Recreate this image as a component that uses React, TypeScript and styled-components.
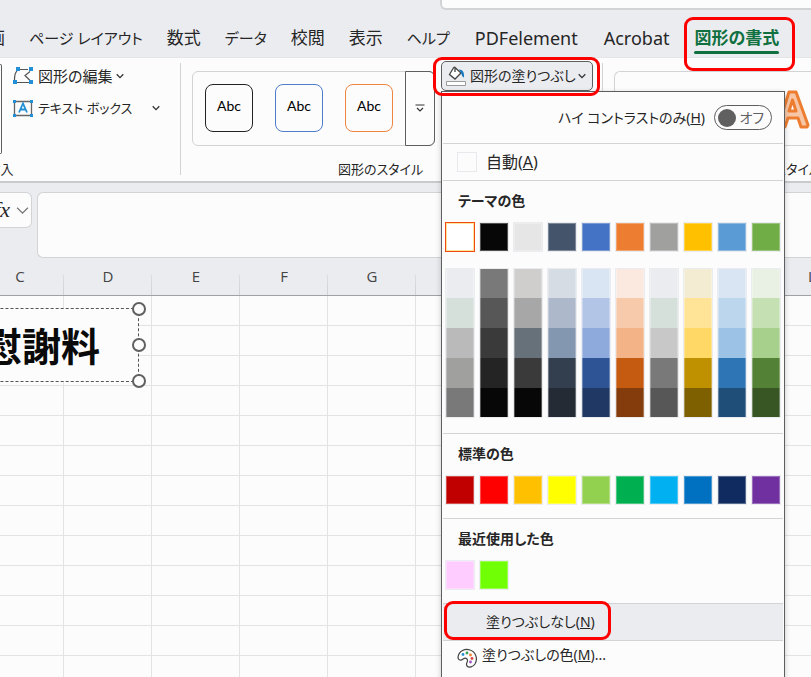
import React from 'react';
import styled, { createGlobalStyle, css } from 'styled-components';

const line = '#d2d3d5';
const chrome = '#ebecf0';
const paper = '#fcfcfc';
const ink = '#262626';

const Global = createGlobalStyle`
  *, *::before, *::after { box-sizing: border-box; }
  body { margin: 0; }
  button, input { font: inherit; color: inherit; }
  button { padding: 0; border: 0; background: none; text-align: left; white-space: nowrap; }
  svg { flex: none; }
`;

const Window = styled.div`
  height: 100vh;
  overflow: hidden;
  display: flex;
  flex-direction: column;
  background: ${chrome};
  color: ${ink};
  font: 15px/20px 'Noto Sans', 'Noto Sans CJK JP', sans-serif;
  font-feature-settings: 'palt';
`;

const TitleBar = styled.header`
  flex: none;
  height: 20px;
  padding-left: 440px;
`;

const SearchBox = styled.div`
  height: 10px;
  border: solid ${line};
  border-width: 0 0 2px 2px;
  border-radius: 0 0 0 6px;
  background: ${paper};
`;

const Tabs = styled.nav`
  flex: none;
  display: flex;
  gap: 24px;
  height: 37px;
  margin-left: -29px;
  padding-bottom: 3px;
  font-size: 17px;
  line-height: 24px;
`;

type Script = 'kanji' | 'kana' | 'latin';

const scriptSize: Record<Script, number> = { kanji: 17, kana: 15, latin: 18 };

const Tab = styled.button<{ $active?: boolean; $script?: Script }>`
  position: relative;
  flex: none;
  align-self: stretch;
  padding: 2px ${p => (p.$script === 'latin' ? 1 : 0)}px 0;
  font-size: ${p => scriptSize[p.$script ?? 'kanji']}px;
  ${p => p.$active && css`
    color: #107040;
    font-weight: 700;
    &::after {
      content: '';
      position: absolute;
      left: 0;
      right: 0;
      bottom: 0;
      height: 3px;
      border-radius: 2px;
      background: #107040;
    }
  `}
`;

const Callout = styled.span<{ $inset: string }>`
  position: absolute;
  z-index: 3;
  inset: ${p => p.$inset};
  border: 3px solid #fe0000;
  border-radius: 9px;
  pointer-events: none;
`;

const Ribbon = styled.section`
  position: relative;
  z-index: 2;
  flex: none;
  display: flex;
  height: 126px;
  border-top: 1px solid #e4e5e7;
  border-bottom: 2px solid #c9cacb;
  background: ${paper};
`;

const Group = styled.div<{ $width?: number }>`
  position: relative;
  flex: ${p => (p.$width ? 'none' : '1 0 auto')};
  width: ${p => (p.$width ? p.$width + 'px' : 'auto')};
  display: flex;
  &:not(:last-child)::after {
    content: '';
    position: absolute;
    right: 0;
    top: 5px;
    height: 112px;
    border-right: 1px solid ${line};
  }
`;

const GroupLabel = styled.span<{ $left: number }>`
  position: absolute;
  left: ${p => p.$left}px;
  bottom: 2px;
  white-space: nowrap;
  font-size: 13px;
`;

const ShapeGallery = styled.div`
  width: 2px;
  height: 90px;
  margin-top: 6px;
  border: solid #5c5e60;
  border-width: 1px 1px 1px 0;
  border-radius: 0 6px 6px 0;
`;

const Commands = styled.div`
  display: flex;
  flex-direction: column;
  gap: 8px;
  padding: 6px 0 0 8px;
`;

const Command = styled.button<{ $gap?: number; $size?: number }>`
  display: flex;
  align-items: center;
  height: 24px;
  font-size: ${p => p.$size ?? 15}px;
  > svg:first-child { margin-right: 4px; }
  > svg:last-child { margin-left: ${p => p.$gap ?? 4}px; }
`;

const Gallery = styled.div`
  flex: none;
  display: flex;
  width: 243px;
  height: 75px;
  margin: 13px 0 0 11px;
  border: 1px solid ${line};
  border-radius: 6px;
`;

const Styles = styled.div`
  flex: 1;
  display: flex;
  gap: 22px;
  padding: 12px;
`;

const StyleTile = styled.button<{ $color: string }>`
  width: 48px;
  height: 48px;
  border: 1px solid ${p => p.$color};
  border-radius: 8px;
  text-align: center;
  color: #000;
  font: 14px/20px Lato, sans-serif;
  padding-bottom: 4px;
`;

const GalleryMore = styled.button`
  display: flex;
  align-items: center;
  justify-content: center;
  width: 30px;
  margin: -1px;
  border: 1px solid #5c5e60;
  border-radius: 0 6px 6px 0;
`;

const WordArtGallery = styled.div`
  flex: 1;
  height: 75px;
  margin: 13px 0 0 11px;
  padding: 16px 0 0 161px;
  border: solid ${line};
  border-width: 1px 0 1px 1px;
  border-radius: 6px 0 0 6px;
`;

const FillAnchor = styled.div`
  position: relative;
  z-index: 2;
  width: 152px;
  height: 30px;
  margin: 3px 0 0 6px;
`;

const FillButton = styled.button`
  display: flex;
  align-items: center;
  width: 100%;
  height: 30px;
  padding-left: 4px;
  border: 1px solid #5c5e60;
  border-radius: 5px;
  background: ${chrome};
  font-size: 14px;
  > svg:first-child { margin-right: 4px; }
  > svg:last-child { margin-left: 2px; }
`;

const Menu = styled.div`
  position: absolute;
  top: 30px;
  left: 0;
  width: 344px;
  height: 620px;
  padding: 0 1px;
  border: 1px solid #5c5e60;
  background: ${paper};
  box-shadow: 0 2px 6px rgba(0, 0, 0, 0.2);
  font-size: 14px;
`;

const ContrastRow = styled.label`
  display: flex;
  align-items: center;
  justify-content: flex-end;
  gap: 9px;
  height: 52px;
  padding-right: 11px;
  border-bottom: 1px solid ${line};
`;

const Switch = styled.span`
  position: relative;
  display: flex;
  align-items: center;
  justify-content: flex-end;
  width: 58px;
  height: 25px;
  padding-right: 7px;
  border: 1px solid #5c5e60;
  border-radius: 13px;
  color: #5f6062;
  &::before {
    content: '';
    position: absolute;
    left: 3px;
    width: 18px;
    height: 18px;
    border-radius: 50%;
    background: #606060;
  }
  input { position: absolute; inset: 0; margin: 0; opacity: 0; }
`;

const MenuItem = styled.button<{ $hover?: boolean; $indent: number; $size?: number }>`
  position: relative;
  display: flex;
  align-items: center;
  width: 100%;
  height: 37px;
  padding-left: ${p => p.$indent}px;
  border-bottom: 1px solid ${line};
  background: ${p => (p.$hover ? chrome : paper)};
  font-size: ${p => p.$size ?? 14}px;
  &:last-child { border: 0; height: 28px; }
  > svg { margin: 6px 5px 0 0; }
`;

const EmptySwatch = styled.span`
  width: 20px;
  height: 20px;
  margin-right: 9px;
  border: 1px solid #e8e9ec;
`;

const Section = styled.section`
  padding-bottom: 13px;
  border-bottom: 1px solid ${line};
`;

const SectionTitle = styled.h2`
  height: 41px;
  margin: 0;
  padding: 10px 0 0 15px;
  font-size: 14px;
  line-height: 20px;
  font-weight: 700;
`;

const Swatches = styled.div`
  display: flex;
  gap: 4px;
  padding-left: 2px;
`;

const Ramps = styled(Swatches)`
  padding-top: 16px;
  padding-bottom: 2px;
`;

const Ramp = styled.div`
  display: flex;
  flex-direction: column;
  border: 1px solid #ebecef;
`;

const Swatch = styled.button<{ $color: string; $selected?: boolean }>`
  width: 30px;
  height: 30px;
  border: 1px solid ${p => (p.$selected ? '#f04a14' : '#ebecef')};
  background: ${p => p.$color};
  box-shadow: inset 0 0 0 1px ${p => (p.$selected ? '#ffe59a' : 'rgba(255,255,255,.3)')};
`;

const Shade = styled.button<{ $color: string }>`
  width: 28px;
  height: 30px;
  background: ${p => p.$color};
  box-shadow: inset 1px 0 rgba(255,255,255,.3), inset -1px 0 rgba(255,255,255,.3);
  &:first-child, &:last-child { height: 29px; }
`;

const FormulaBar = styled.div`
  flex: none;
  display: flex;
  gap: 5px;
  height: 75px;
  padding-top: 9px;
`;

const FunctionBox = styled.button`
  display: flex;
  align-items: center;
  justify-content: flex-end;
  gap: 6px;
  width: 32px;
  height: 36px;
  padding-right: 2px;
  border: 1px solid ${line};
  border-left: 0;
  border-radius: 0 6px 6px 0;
  background: ${paper};
  font: italic 22px/24px 'Liberation Serif', serif;
  overflow: hidden;
`;

const FormulaInput = styled.input`
  flex: 1;
  height: 66px;
  border: 1px solid ${line};
  border-right: 0;
  border-radius: 6px 0 0 6px;
  background: ${paper};
`;

const SheetArea = styled.main`
  position: relative;
  flex: 1;
  min-height: 0;
  overflow: hidden;
`;

const Sheet = styled.table`
  table-layout: fixed;
  width: 880px;
  margin-left: -24px;
  border-spacing: 0;
  background: ${paper};
  th {
    height: 38px;
    padding: 0 0 2px;
    border-bottom: 1px solid #a0a1a3;
    background: linear-gradient(#dcddde, #d0d2d2) right bottom / 1px 20px no-repeat ${chrome};
    color: #444;
    font: 15px/20px 'Open Sans', sans-serif;
  }
  td {
    height: 30px;
    padding: 0;
    border: solid #e2e3e3;
    border-width: 0 1px 1px 0;
  }
`;

const Shape = styled.div`
  position: absolute;
  left: -100px;
  top: 50px;
  width: 239px;
  height: 74px;
  padding: 15px 38px 0 0;
  border: 1px dashed #555;
  background: ${paper};
  color: #0a0a0a;
  text-align: right;
  white-space: nowrap;
  font: 700 39px/40px 'Noto Sans CJK JP', sans-serif;
`;

const Handle = styled.i<{ $top: string }>`
  position: absolute;
  right: -8px;
  top: ${p => p.$top};
  width: 14px;
  height: 14px;
  margin-top: -7px;
  border: 2px solid #606060;
  border-radius: 50%;
  background: ${paper};
`;

const Chevron = ({ size = 8, color = '#333' }: { size?: number; color?: string }) => (
  <svg width={size} height={size} viewBox="0 0 8 8" fill="none" stroke={color} strokeWidth={size > 8 ? 0.8 : 1.3}>
    <path d="M.7 2.3 4 5.6l3.3-3.3" />
  </svg>
);

const EditShapeIcon = () => (
  <svg width="24" height="20" viewBox="0 0 24 20" fill="none">
    <path d="M7 5C4.500 7 4.500 10 4.500 14M9 3.500h9M20 5.500l-5 4 5 5M7 16.500h12" stroke="#555" strokeWidth="1.200" />
    <path d="M6 1h4v4H6zM19 1h4v4h-4zM3 14h4v4H3zM19 14h4v4h-4z" fill="#2190d6" />
  </svg>
);

const TextBoxIcon = () => (
  <svg width="24" height="20" viewBox="0 0 24 20" fill="none">
    <path d="M4.500 3.500h17v14h-17z" stroke="#666" strokeWidth="1.300" />
    <path d="m9 14.500 4-9 4 9M10.500 11.500h5" stroke="#2190d6" strokeWidth="1.800" />
    <path d="M3 2h3v3H3zM20 2h3v3h-3zM3 16h3v3H3zM20 16h3v3h-3z" fill="#2190d6" />
  </svg>
);

const BucketIcon = () => (
  <svg width="20" height="22" viewBox="0 0 20 22" fill="none">
    <path d="M8 2 3.500 9.500 9 14l6-6-6-5.500V7" stroke="#444" strokeWidth="1.300" fill="#fff" />
    <path d="M13 4.500c4 0 5.500 3 5 8-2.500-1-2-4-4.500-7" fill="#1878bd" />
    <path d="M.5 16.500h19v4H.5z" fill="#fff" stroke="#9a9b98" />
  </svg>
);

const PaletteIcon = () => (
  <svg width="20" height="20" viewBox="0 0 20 20" fill="none">
    <path d="M1 9C2 3 8 0 13 2c6 2 8 9 5 14-2 3-6 4-8 2-2-3 2-4 0-7-3-3-4 2-7 1-1 0-2-1-2-3Z" stroke="#444" strokeWidth="1.2" />
    <circle cx="6" cy="6.500" r="1.400" fill="#2490d0" />
    <circle cx="10" cy="5" r="1.400" fill="#39a055" />
    <circle cx="13.500" cy="7" r="1.400" fill="#f08030" />
    <circle cx="15" cy="10.500" r="1.400" fill="#e04444" />
    <circle cx="13.500" cy="14" r="1.400" fill="#a050c0" />
  </svg>
);

const WordArtIcon = () => (
  <svg width="34" height="42" viewBox="0 0 34 42">
    <path d="M2 39 13 4h7l12 33-1 2h-6l-3-9H12l-3 9Zm11-16h7L16.500 12Z" fill="#f7c6a6" stroke="#ed7d31" strokeWidth="3" strokeLinejoin="round" />
  </svg>
);

const themeColors = ['#ffffff', '#070707', '#e6e6e6', '#44546a', '#4472c4', '#ed7d31', '#a0a09e', '#ffc000', '#5b9bd5', '#70ad47'];
const ramps = [
  ['#ebecf0', '#d6e0da', '#bababa', '#a0a09e', '#797979'],
  ['#797979', '#575757', '#3a3a3a', '#242424', '#070707'],
  ['#d0cecd', '#a7a7a7', '#67717a', '#3a3a3a', '#070707'],
  ['#d5dce4', '#adb8ca', '#8497b0', '#333f4f', '#242b35'],
  ['#dae5f3', '#b3c5e7', '#8ea9db', '#2f5496', '#203864'],
  ['#fbe9e0', '#f7caac', '#f4b287', '#c55a11', '#843c0c'],
  ['#ebecf0', '#d6e0da', '#c8c8c8', '#797979', '#575757'],
  ['#f4ebd3', '#ffe497', '#ffd865', '#bf9000', '#7f6000'],
  ['#dae5f3', '#bcd6ee', '#9cc2e5', '#2e75b6', '#1f4e79'],
  ['#e8f1e3', '#c5e0b3', '#a8d08d', '#538135', '#385623'],
];
const standard = ['#c00000', '#ff0000', '#ffc000', '#ffff00', '#92d050', '#00b050', '#00b0f0', '#0070c0', '#0f2b60', '#7030a0'];
const recent = ['#ffccff', '#70ff05'];
const tabs: { label: string; script: Script }[] = [
  { label: '描画', script: 'kanji' },
  { label: 'ページ レイアウト', script: 'kana' },
  { label: '数式', script: 'kanji' },
  { label: 'データ', script: 'kana' },
  { label: '校閲', script: 'kanji' },
  { label: '表示', script: 'kanji' },
  { label: 'ヘルプ', script: 'kana' },
  { label: 'PDFelement', script: 'latin' },
  { label: 'Acrobat', script: 'latin' },
];
const columns = [...'CDEFGHIJKL'];

const FillMenu = () => (
  <Menu>
    <ContrastRow>
      <span>ハイ コントラストのみ(<u>H</u>)</span>
      <Switch><input type="checkbox" role="switch" />オフ</Switch>
    </ContrastRow>
    <MenuItem $indent={14} $size={16}><EmptySwatch /><span>自動(<u>A</u>)</span></MenuItem>
    <Section>
      <SectionTitle>テーマの色</SectionTitle>
      <Swatches>
        {themeColors.map((c, i) => <Swatch key={c} $color={c} $selected={i === 0} aria-label={c} />)}
      </Swatches>
      <Ramps>
        {ramps.map((ramp, i) => (
          <Ramp key={i}>{ramp.map(c => <Shade key={c} $color={c} aria-label={c} />)}</Ramp>
        ))}
      </Ramps>
    </Section>
    <Section>
      <SectionTitle>標準の色</SectionTitle>
      <Swatches>{standard.map(c => <Swatch key={c} $color={c} aria-label={c} />)}</Swatches>
    </Section>
    <Section>
      <SectionTitle>最近使用した色</SectionTitle>
      <Swatches>{recent.map(c => <Swatch key={c} $color={c} aria-label={c} />)}</Swatches>
    </Section>
    <MenuItem $hover $indent={43}>
      <span>塗りつぶしなし(<u>N</u>)</span>
      <Callout $inset="-3px 172px 0 1px" />
    </MenuItem>
    <MenuItem $indent={14}><PaletteIcon /><span>塗りつぶしの色(<u>M</u>)...</span></MenuItem>
  </Menu>
);

export default function App() {
  return (
    <Window>
      <Global />
      <TitleBar><SearchBox /></TitleBar>
      <Tabs>
        {tabs.map(t => <Tab key={t.label} $script={t.script}>{t.label}</Tab>)}
        <Tab $active>図形の書式<Callout $inset="-3px -16px -17px -10px" /></Tab>
      </Tabs>
      <Ribbon>
        <Group $width={181}>
          <ShapeGallery />
          <Commands>
            <Command><EditShapeIcon />図形の編集<Chevron /></Command>
            <Command $gap={20} $size={13}><TextBoxIcon />テキスト ボックス<Chevron /></Command>
          </Commands>
          <GroupLabel $left={-51}>図形の挿入</GroupLabel>
        </Group>
        <Group $width={422}>
          <Gallery>
            <Styles>
              <StyleTile $color="#222">Abc</StyleTile>
              <StyleTile $color="#4f7dcb">Abc</StyleTile>
              <StyleTile $color="#ee8640">Abc</StyleTile>
            </Styles>
            <GalleryMore aria-label="その他">
              <svg width="10" height="9" viewBox="0 0 10 9" fill="none" stroke="#333" strokeWidth="1.2">
                <path d="M.5 1h9M2 4l3 3 3-3" />
              </svg>
            </GalleryMore>
          </Gallery>
          <FillAnchor>
            <FillButton><BucketIcon />図形の塗りつぶし<Chevron /></FillButton>
            <Callout $inset="-4px -7px -5px -8px" />
            <FillMenu />
          </FillAnchor>
          <GroupLabel $left={157}>図形のスタイル</GroupLabel>
        </Group>
        <Group>
          <WordArtGallery><WordArtIcon /></WordArtGallery>
          <GroupLabel $left={90}>ワードアートのスタイル</GroupLabel>
        </Group>
      </Ribbon>
      <FormulaBar>
        <FunctionBox><span>fx</span><Chevron size={13} color="#777" /></FunctionBox>
        <FormulaInput aria-label="数式バー" />
      </FormulaBar>
      <SheetArea>
        <Sheet>
          <thead><tr>{columns.map(c => <th key={c}>{c}</th>)}</tr></thead>
          <tbody>
            {Array.from({ length: 13 }, (_, r) => (
              <tr key={r}>{columns.map(c => <td key={c} />)}</tr>
            ))}
          </tbody>
        </Sheet>
        <Shape>
          慰謝料
          <Handle $top="0" /><Handle $top="50%" /><Handle $top="100%" />
        </Shape>
      </SheetArea>
    </Window>
  );
}
